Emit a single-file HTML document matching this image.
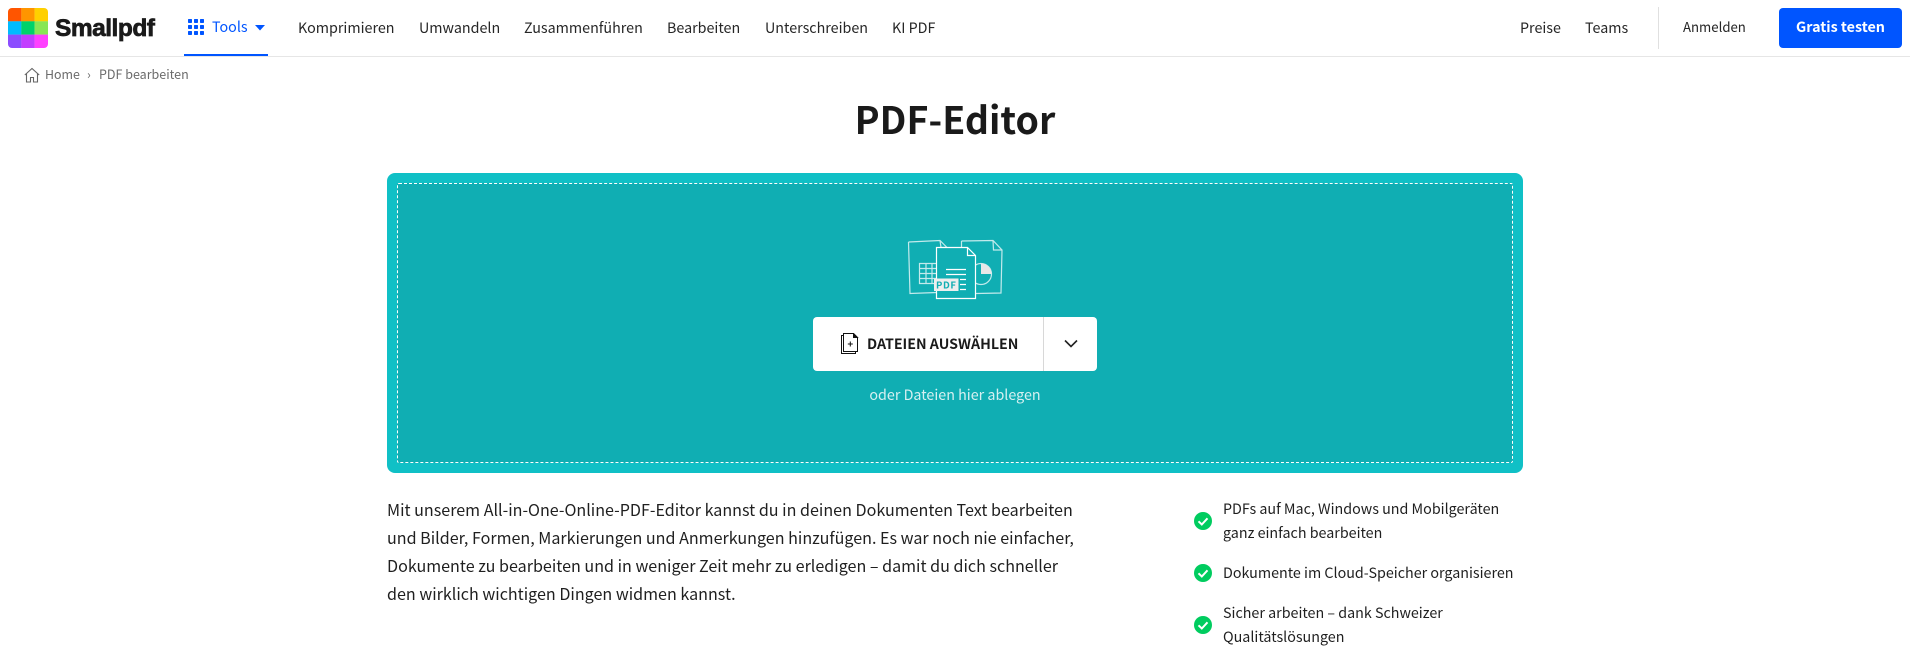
<!DOCTYPE html>
<html lang="de"><head><meta charset="utf-8"><title>PDF-Editor</title>
<style>
html,body{margin:0;padding:0;background:#fff}
body{width:1910px;height:670px;overflow:hidden;position:relative;font-family:"Noto Sans CJK JP","Liberation Sans",sans-serif;color:#1f1f1f}
.t{position:absolute;white-space:nowrap;line-height:24px}
.n{font-size:14.3px;top:16px;color:#262626}
.a{position:absolute}
</style></head><body>
<div class="a" style="left:0;top:56px;width:1910px;height:1px;background:#e6e6e6"></div>
<svg class="a" style="left:8px;top:8px" width="40" height="40" viewBox="0 0 40 40">
<defs><clipPath id="c"><rect width="40" height="40" rx="4"/></clipPath></defs>
<g clip-path="url(#c)">
<rect x="0" y="0" width="13.4" height="13.4" fill="#ff5500"/><rect x="13.3" y="0" width="13.4" height="13.4" fill="#ff9500"/><rect x="26.6" y="0" width="13.4" height="13.4" fill="#ffd000"/>
<rect x="0" y="13.3" width="13.4" height="13.4" fill="#00bbff"/><rect x="13.3" y="13.3" width="13.4" height="13.4" fill="#00d26a"/><rect x="26.6" y="13.3" width="13.4" height="13.4" fill="#88e655"/>
<rect x="0" y="26.6" width="13.4" height="13.4" fill="#8c4dff"/><rect x="13.3" y="26.6" width="13.4" height="13.4" fill="#c23dff"/><rect x="26.6" y="26.6" width="13.4" height="13.4" fill="#ff40ff"/>
</g></svg>
<div class="t" style="left:55px;top:15px;font:700 24.5px/28px 'Liberation Sans',sans-serif;color:#1a1a1a;letter-spacing:-.5px;-webkit-text-stroke:.7px #1a1a1a">Smallpdf</div>
<svg class="a" style="left:188px;top:19px" width="16" height="16" fill="#0055ff"><rect x="0" y="0" width="4" height="4" rx=".7"/><rect x="6" y="0" width="4" height="4" rx=".7"/><rect x="12" y="0" width="4" height="4" rx=".7"/><rect x="0" y="6" width="4" height="4" rx=".7"/><rect x="6" y="6" width="4" height="4" rx=".7"/><rect x="12" y="6" width="4" height="4" rx=".7"/><rect x="0" y="12" width="4" height="4" rx=".7"/><rect x="6" y="12" width="4" height="4" rx=".7"/><rect x="12" y="12" width="4" height="4" rx=".7"/></svg>
<div class="t n" style="left:212px;top:15px;color:#0055ff">Tools</div>
<svg class="a" style="left:255px;top:25px" width="10" height="6"><path d="M0 0H10L5 5.500Z" fill="#0055ff"/></svg>
<div class="a" style="left:184px;top:54px;width:84px;height:2px;background:#0055ff"></div>
<div class="t n" style="left:298px">Komprimieren</div>
<div class="t n" style="left:419px">Umwandeln</div>
<div class="t n" style="left:524px">Zusammenführen</div>
<div class="t n" style="left:667px">Bearbeiten</div>
<div class="t n" style="left:765px">Unterschreiben</div>
<div class="t n" style="left:892px">KI PDF</div>
<div class="t n" style="left:1520px">Preise</div>
<div class="t n" style="left:1585px">Teams</div>
<div class="a" style="left:1658px;top:7px;width:1px;height:42px;background:#e0e0e0"></div>
<div class="t n" style="left:1683px;top:15px;font-size:13.2px">Anmelden</div>
<div class="a" style="left:1779px;top:8px;width:123px;height:40px;background:#0055ff;border-radius:4px;color:#fff;font-weight:700;font-size:14.3px;line-height:38px;text-align:center">Gratis testen</div>

<svg class="a" style="left:24px;top:67px" width="16" height="16" fill="none" stroke="#666" stroke-width="1.1"><path d="M.8 8 8 1.500l7.200 6.500M2.500 6.500v8.500h4v-4.500h3v4.500h4V6.500"/></svg>
<div class="t" style="left:45px;top:62px;font-size:12.4px;color:#6b6b6b">Home</div>
<div class="t" style="left:87px;top:62px;font-size:12.4px;color:#6b6b6b">›</div>
<div class="t" style="left:99px;top:62px;font-size:12.5px;color:#6b6b6b">PDF bearbeiten</div>

<div class="t" style="left:0;width:1910px;top:94px;text-align:center;font-size:37.500px;line-height:48px;font-weight:700;color:#1a1a1a">PDF-Editor</div>

<div class="a" style="left:387px;top:173px;width:1136px;height:300px;border-radius:8px;background:#10c0c6"></div>
<div class="a" style="left:397px;top:183px;width:1116px;height:280px;box-sizing:border-box;background:#10aeb3;border:1px dashed #fff;border-radius:2px"></div>

<svg class="a" style="left:895px;top:230px" width="120" height="80" viewBox="0 0 120 80" fill="none" stroke="#fff" stroke-width="1.200">
<g opacity=".75">
<path d="M13.500 12 45 10.500 52 17.500M45 10.500 46 17.500 52 17.500 M13.500 12 15 63.500 42 62.500"/>
<path d="M42 33.500H24.500V53.500H42M24.500 38.500H42M24.500 43.500H42M24.500 48.500H42M31 33.500V53.500M37 33.500V53.500"/>
<path d="M66.500 11 98 10.500 107 20 106 63 81 63.500M98 10.500 98.500 20 107 20M66.500 11V17"/>
<circle cx="86" cy="44" r="10.500"/>
</g>
<path d="M86 33.500A10.500 10.500 0 0 1 96.500 44H86Z" fill="#e8e8e8" stroke="none"/>
<path d="M41.500 17.500H72.500L80.500 25.500V68.500H41.500Z" fill="#10aeb3"/>
<path d="M72.500 17.500V25.500H80.500"/>
<path d="M51 39.500H71M51 44.500H71M65 49.500H71M65 54.500H71M65 59.500H71"/>
<rect x="39" y="48.500" width="24.500" height="12.500" fill="#eeeeee" stroke="none"/>
<text x="51.300" y="58.500" text-anchor="middle" font-family="'Noto Sans CJK JP',sans-serif" font-size="9.500" font-weight="700" fill="#10aeb3" stroke="none" letter-spacing=".6">PDF</text>
</svg>

<div class="a" style="left:813px;top:317px;width:284px;height:54px;background:#fff;border-radius:4px"></div>
<div class="a" style="left:1043px;top:317px;width:1px;height:54px;background:#d8d8d8"></div>
<svg class="a" style="left:840px;top:333px" width="20" height="22" fill="none" stroke="#111" stroke-width="1"><path d="M3.500 .5H13.500L17.500 4.500V18.500H3.500Z" fill="#fff"/><path d="M3.500 2.500H1.500V20.500H15.500V18.500"/><path d="M13.500 .5V4.500H17.500Z" fill="#111"/><path d="M7.800 11H12.800M10.300 8.500V13.500"/></svg>
<div class="t" style="left:867px;top:332px;font-size:14.200px;font-weight:700;color:#1a1a1a">DATEIEN AUSWÄHLEN</div>
<svg class="a" style="left:1064px;top:339px" width="14" height="10" fill="none" stroke="#222" stroke-width="1.600"><path d="M1 1.500 7 7.500 13 1.500"/></svg>
<div class="t" style="left:810px;width:290px;text-align:center;top:383px;font-size:14.300px;color:#d6f0f1">oder Dateien hier ablegen</div>

<div class="t" style="left:387px;top:495px;font-size:16.100px;line-height:28px;color:#1f1f1f">Mit unserem All-in-One-Online-PDF-Editor kannst du in deinen Dokumenten Text bearbeiten<br>und Bilder, Formen, Markierungen und Anmerkungen hinzufügen. Es war noch nie einfacher,<br>Dokumente zu bearbeiten und in weniger Zeit mehr zu erledigen – damit du dich schneller<br>den wirklich wichtigen Dingen widmen kannst.</div>

<svg class="a" style="left:1194px;top:512px" width="18" height="18"><circle cx="9" cy="9" r="9" fill="#00cc5f"/><path d="M4.500 9.300 7.800 12.500 13.500 6.300" fill="none" stroke="#fff" stroke-width="2"/></svg>
<svg class="a" style="left:1194px;top:564px" width="18" height="18"><circle cx="9" cy="9" r="9" fill="#00cc5f"/><path d="M4.500 9.300 7.800 12.500 13.500 6.300" fill="none" stroke="#fff" stroke-width="2"/></svg>
<svg class="a" style="left:1194px;top:616px" width="18" height="18"><circle cx="9" cy="9" r="9" fill="#00cc5f"/><path d="M4.500 9.300 7.800 12.500 13.500 6.300" fill="none" stroke="#fff" stroke-width="2"/></svg>
<div class="t" style="left:1223px;top:497px;font-size:14.300px;color:#1f1f1f">PDFs auf Mac, Windows und Mobilgeräten<br>ganz einfach bearbeiten</div>
<div class="t" style="left:1223px;top:561px;font-size:14.300px;color:#1f1f1f">Dokumente im Cloud-Speicher organisieren</div>
<div class="t" style="left:1223px;top:601px;font-size:14.300px;color:#1f1f1f">Sicher arbeiten – dank Schweizer<br>Qualitätslösungen</div>
</body></html>
